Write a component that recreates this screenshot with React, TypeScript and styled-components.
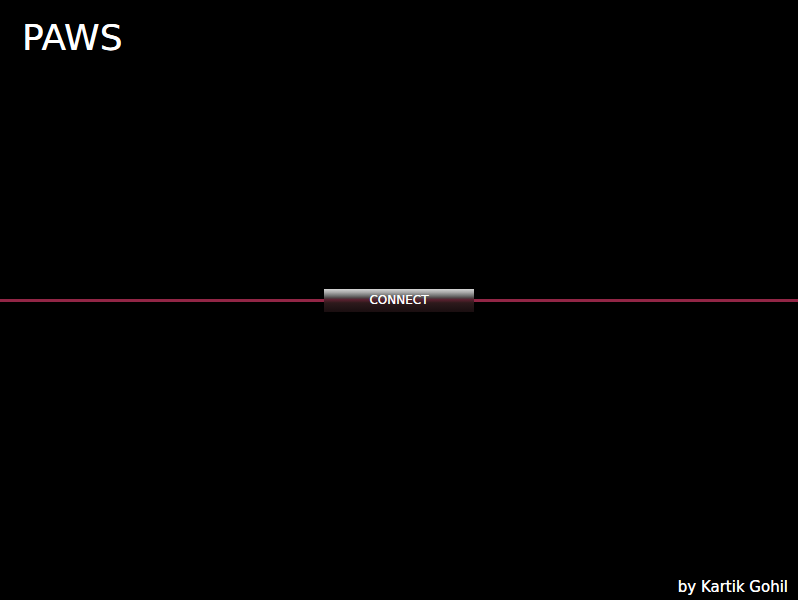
import React from "react";
import styled, { createGlobalStyle } from "styled-components";

const Global = createGlobalStyle`
  html, body { margin: 0; padding: 0; background: #000; }
  body { font-family: "DejaVu Sans", Verdana, sans-serif; color: #fff; }
`;

const Page = styled.div`
  height: 100vh;
  display: grid;
  grid-template-rows: 1fr auto 1fr;
  background: #000;
  overflow: hidden;
`;

const Header = styled.header`
  align-self: start;
  padding: 14px 0 0 22px;
`;

const Title = styled.h1`
  margin: 0;
  font-size: 36px;
  font-weight: normal;
  line-height: 48px;
  color: #fff;
  text-shadow: 0 0 0.4px #fff;
`;

const Stage = styled.div`
  display: flex;
  align-items: center;
`;

const Wire = styled.div`
  flex: 1;
  height: 3px;
  background: #922646;
`;

const ConnectButton = styled.button`
  width: 150px;
  height: 23px;
  padding: 0 0 1px;
  border: none;
  font-family: "DejaVu Sans", Verdana, sans-serif;
  font-size: 12px;
  color: #fff;
  text-shadow: 0 0 0.4px #fff;
  cursor: pointer;
  background: linear-gradient(
    to bottom,
    #d4d4d4 0%,
    #a8a8a8 15%,
    #6e6e6e 30%,
    #4a3e40 40%,
    #5a2232 45%,
    #4a1e28 52%,
    #2e1a1c 60%,
    #221416 80%,
    #1a0e10 100%
  );
`;

const Footer = styled.footer`
  align-self: end;
  justify-self: end;
  padding: 0 10px 3px 0;
  font-size: 15px;
  line-height: 20px;
  text-shadow: 0 0 0.4px #fff;
`;

export default function App() {
  return (
    <>
      <Global />
      <Page>
        <Header>
          <Title>PAWS</Title>
        </Header>
        <Stage>
          <Wire />
          <ConnectButton>CONNECT</ConnectButton>
          <Wire />
        </Stage>
        <Footer>by Kartik Gohil</Footer>
      </Page>
    </>
  );
}
